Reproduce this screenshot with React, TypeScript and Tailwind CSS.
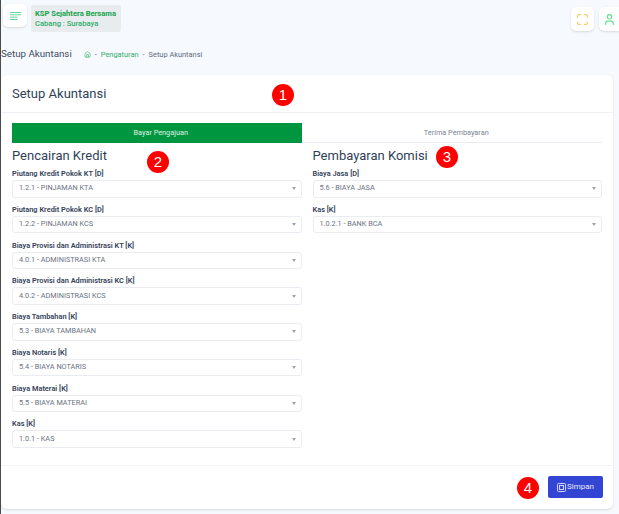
import { Home, Maximize, User } from "lucide-react";

const font = { fontFamily: 'Roboto, "Liberation Sans", sans-serif' };

type Field = { label: string; value: string };

const kredit: Field[] = [
  { label: "Piutang Kredit Pokok KT [D]", value: "1.2.1 - PINJAMAN KTA" },
  { label: "Piutang Kredit Pokok KC [D]", value: "1.2.2 - PINJAMAN KCS" },
  { label: "Biaya Provisi dan Administrasi KT [K]", value: "4.0.1 - ADMINISTRASI KTA" },
  { label: "Biaya Provisi dan Administrasi KC [K]", value: "4.0.2 - ADMINISTRASI KCS" },
  { label: "Biaya Tambahan [K]", value: "5.3 - BIAYA TAMBAHAN" },
  { label: "Biaya Notaris [K]", value: "5.4 - BIAYA NOTARIS" },
  { label: "Biaya Materai [K]", value: "5.5 - BIAYA MATERAI" },
  { label: "Kas [K]", value: "1.0.1 - KAS" },
];

const komisi: Field[] = [
  { label: "Biaya Jasa [D]", value: "5.6 - BIAYA JASA" },
  { label: "Kas [K]", value: "1.0.2.1 - BANK BCA" },
];

function SelectField({ label, value }: Field) {
  return (
    <div className="mb-[6.25px]">
      <div className="mb-[1px] h-[11px] whitespace-nowrap text-[7.4px] leading-[11px] font-semibold text-[#344258]">
        {label}
      </div>
      <div className="flex h-[17.5px] items-center justify-between rounded-[3px] border border-[#e9ecf1] bg-white pl-[6px] pr-[5px] text-[7.3px] text-[#6b7280]">
        <span>{value}</span>
        <span className="h-0 w-0 border-x-[2px] border-t-[3px] border-x-transparent border-t-[#9ca3af]" />
      </div>
    </div>
  );
}

function Marker({ n, className }: { n: number; className: string }) {
  return (
    <div
      className={`absolute flex h-[22px] w-[22px] items-center justify-center rounded-full bg-[#fe0000] text-[15px] text-white ${className}`}
      style={{ fontFamily: '"Liberation Sans", sans-serif' }}
    >
      {n}
    </div>
  );
}

export default function App() {
  return (
    <div
      className="relative h-[514px] w-[619px] overflow-hidden border-l border-[#4b4b4b] bg-[#f6f9fe]"
      style={font}
    >
      {/* top bar */}
      <div className="flex h-[37px] items-start">
        <button className="ml-[2px] mt-[4px] flex h-[23px] w-[24px] items-center justify-center rounded-[5px] bg-white shadow-sm">
          <svg width="11" height="8" viewBox="0 0 11 8" fill="none" stroke="#63d69d" strokeWidth="1">
            <path d="M0 .5h11M0 2.8h11M0 5.1h7.5M0 7.5h7.5" />
          </svg>
        </button>
        <div className="ml-[4px] mt-[5px] flex h-[27px] w-[90px] flex-col justify-center whitespace-nowrap rounded-[2px] bg-[#e9ecef] pl-[4px] text-[7.6px] leading-[9.5px] font-medium text-[#16a34a]">
          <span className="font-bold">KSP Sejahtera Bersama</span>
          <span className="text-[#2fae68]">Cabang : Surabaya</span>
        </div>
        <div className="ml-auto mr-[-1px] mt-[7px] flex gap-[5px]">
          <button className="flex h-[24px] w-[23px] items-center justify-center rounded-[5px] bg-white shadow-sm">
            <Maximize size={13} color="#fcc55f" strokeWidth={2} />
          </button>
          <button className="flex h-[24px] w-[21px] items-center justify-center rounded-l-[5px] bg-white pr-[1px] shadow-sm">
            <User size={13} color="#5fdf8a" strokeWidth={2} />
          </button>
        </div>
      </div>

      {/* breadcrumb */}
      <div className="flex h-[38px] items-center pb-[3px]">
        <div className="text-[9.75px] text-[#3d4a5f]">Setup Akuntansi</div>
        <div className="ml-[12px] flex items-center gap-[4px] text-[7.4px] text-[#5b6b82]">
          <Home size={7} color="#2fae68" />
          <span>-</span>
          <span className="text-[#2fae68]">Pengaturan</span>
          <span>-</span>
          <span>Setup Akuntansi</span>
        </div>
      </div>

      {/* card */}
      <div className="flex h-[434px] w-[612px] flex-col rounded-[6px] bg-white shadow-sm">
        <div className="flex h-[38px] shrink-0 items-center border-b border-[#eef0f5] pl-[11px] text-[13px] text-[#2f3f58]">
          Setup Akuntansi
        </div>

        <div className="min-h-0 flex-1 px-[11px] pt-[10px]">
          <div className="flex h-[20px] text-[7.3px]">
            <div className="flex w-[290px] items-center justify-center bg-[#009640] pl-[8px] pt-[1px] text-[#dff3e6]">
              Bayar Pengajuan
            </div>
            <div className="ml-[1px] flex w-[300px] items-center justify-center border-b border-[#e9ecf1] pl-[8px] pt-[1px] text-[#7b8494]">
              Terima Pembayaran
            </div>
          </div>

          <div className="mt-[5px] flex gap-[11px]">
            <div className="w-[290px]">
              <h2 className="mb-[4px] h-[16px] text-[13px] leading-[16px] text-[#2f3f58]">Pencairan Kredit</h2>
              {kredit.map((f) => (
                <SelectField key={f.label} {...f} />
              ))}
            </div>
            <div className="w-[290px]">
              <h2 className="mb-[4px] h-[16px] text-[13px] leading-[16px] text-[#2f3f58]">Pembayaran Komisi</h2>
              {komisi.map((f) => (
                <SelectField key={f.value} {...f} />
              ))}
            </div>
          </div>
        </div>

        <div className="flex h-[44px] shrink-0 items-start justify-end border-t border-[#f1f3f6] pr-[10px] pt-[10px]">
          <button className="flex h-[22px] w-[55px] items-center justify-center gap-[1px] rounded-[2px] bg-[#3346d3] text-[8px] text-[#e6e9fb]">
            <svg width="9" height="9" viewBox="0 0 9 9" fill="none" stroke="currentColor" strokeWidth="0.9">
              <rect x="0.5" y="0.5" width="8" height="8" rx="1" />
              <rect x="2.5" y="2.5" width="4" height="4" />
            </svg>
            Simpan
          </button>
        </div>
      </div>

      <Marker n={1} className="left-[271px] top-[84px]" />
      <Marker n={2} className="left-[146px] top-[151px]" />
      <Marker n={3} className="left-[435px] top-[146px]" />
      <Marker n={4} className="left-[516px] top-[477px]" />
    </div>
  );
}
